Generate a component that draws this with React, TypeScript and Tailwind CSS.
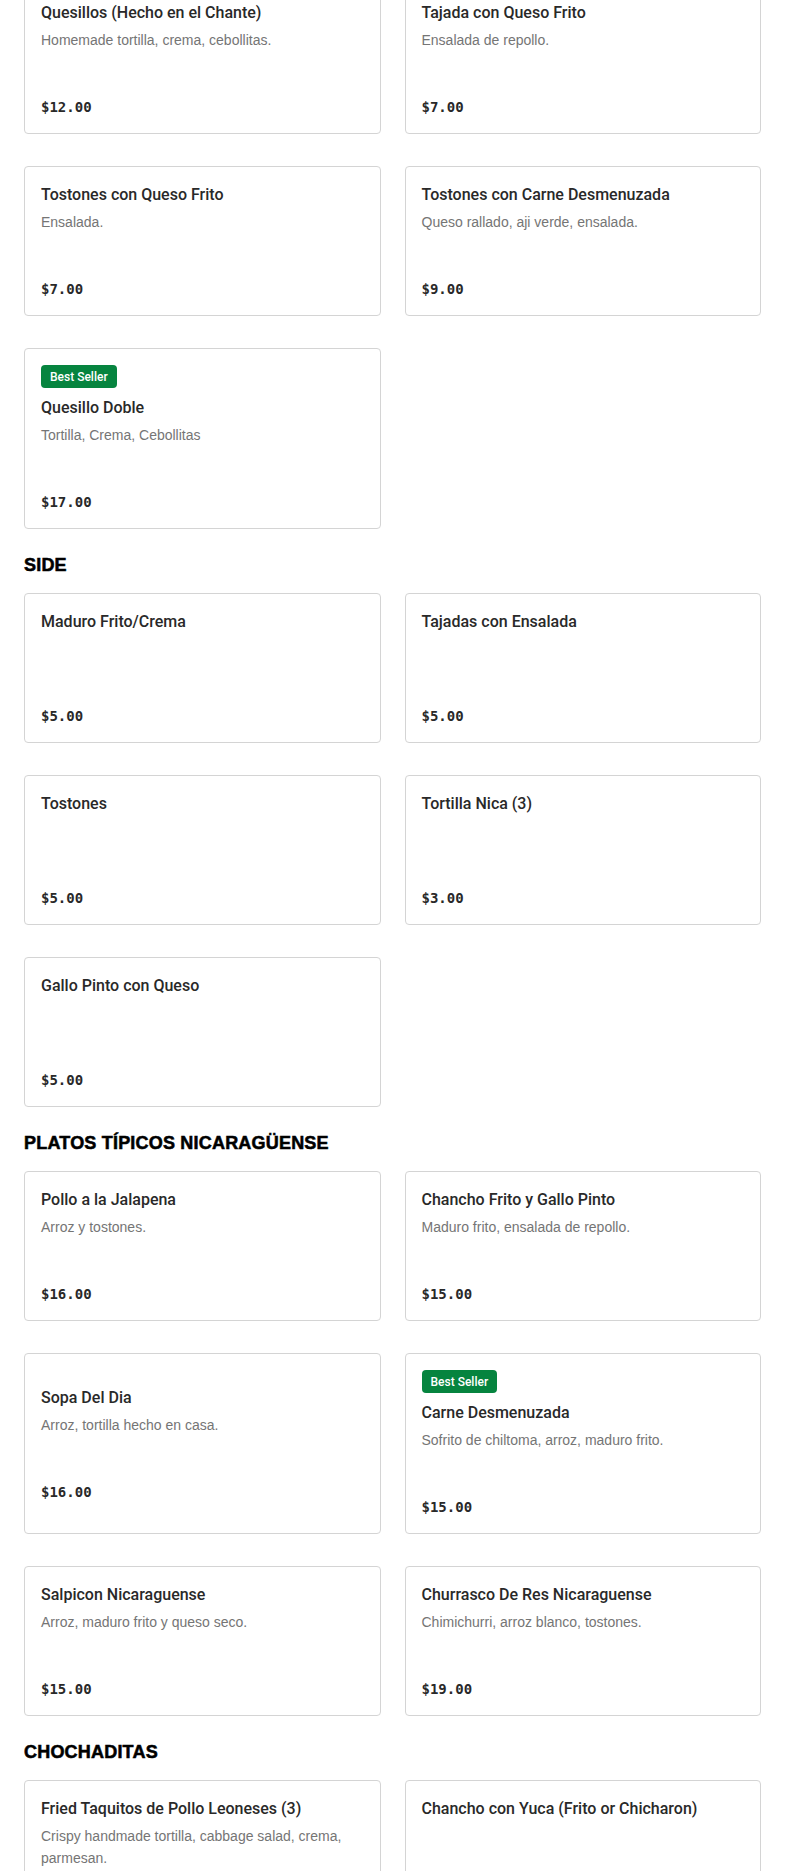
import React from 'react';

interface MenuItem {
  name: string;
  description?: string;
  price?: string;
  badge?: string;
}

interface MenuSection {
  title?: string;
  items: MenuItem[];
}

const sections: MenuSection[] = [
  {
    items: [
      { name: 'Quesillos (Hecho en el Chante)', description: 'Homemade tortilla, crema, cebollitas.', price: '$12.00' },
      { name: 'Tajada con Queso Frito', description: 'Ensalada de repollo.', price: '$7.00' },
      { name: 'Tostones con Queso Frito', description: 'Ensalada.', price: '$7.00' },
      { name: 'Tostones con Carne Desmenuzada', description: 'Queso rallado, aji verde, ensalada.', price: '$9.00' },
      { name: 'Quesillo Doble', description: 'Tortilla, Crema, Cebollitas', price: '$17.00', badge: 'Best Seller' },
    ],
  },
  {
    title: 'SIDE',
    items: [
      { name: 'Maduro Frito/Crema', price: '$5.00' },
      { name: 'Tajadas con Ensalada', price: '$5.00' },
      { name: 'Tostones', price: '$5.00' },
      { name: 'Tortilla Nica (3)', price: '$3.00' },
      { name: 'Gallo Pinto con Queso', price: '$5.00' },
    ],
  },
  {
    title: 'PLATOS TÍPICOS NICARAGÜENSE',
    items: [
      { name: 'Pollo a la Jalapena', description: 'Arroz y tostones.', price: '$16.00' },
      { name: 'Chancho Frito y Gallo Pinto', description: 'Maduro frito, ensalada de repollo.', price: '$15.00' },
      { name: 'Sopa Del Dia', description: 'Arroz, tortilla hecho en casa.', price: '$16.00' },
      { name: 'Carne Desmenuzada', description: 'Sofrito de chiltoma, arroz, maduro frito.', price: '$15.00', badge: 'Best Seller' },
      { name: 'Salpicon Nicaraguense', description: 'Arroz, maduro frito y queso seco.', price: '$15.00' },
      { name: 'Churrasco De Res Nicaraguense', description: 'Chimichurri, arroz blanco, tostones.', price: '$19.00' },
    ],
  },
  {
    title: 'CHOCHADITAS',
    items: [
      { name: 'Fried Taquitos de Pollo Leoneses (3)', description: 'Crispy handmade tortilla, cabbage salad, crema, parmesan.' },
      { name: 'Chancho con Yuca (Frito or Chicharon)' },
    ],
  },
];

function ItemCard({ item }: { item: MenuItem }) {
  return (
    <div className="flex flex-col justify-center rounded-[4px] border border-[#d4d4d4] bg-white p-4">
      <div className="flex flex-col">
        {item.badge && (
          <span className="mb-2 inline-flex h-[23px] w-fit items-center rounded-[4px] bg-[#06843f] px-[9px] font-['Roboto',sans-serif] text-[12px] font-medium text-white">
            {item.badge}
          </span>
        )}
        <h3 className="font-['Roboto',sans-serif] text-[16px] font-medium leading-[24px] text-[#292929]">
          {item.name}
        </h3>
        <div className="min-h-[72px]">
          {item.description && (
            <p className="pt-1 font-['Liberation_Sans',sans-serif] text-[14px] leading-[22px] text-[#757575]">
              {item.description}
            </p>
          )}
        </div>
        {item.price && (
          <p className="h-5 font-['DejaVu_Sans_Mono',monospace] text-[14px] font-bold leading-[20px] text-[#292929]">
            {item.price}
          </p>
        )}
      </div>
    </div>
  );
}

export default function App() {
  return (
    <div className="min-h-screen bg-white px-6">
      {sections.map((section, index) => (
        <section key={section.title ?? index} className={index === 0 ? '-mt-4' : ''}>
          {section.title && (
            <h2 className="mb-[14px] mt-[22px] font-['Liberation_Sans',sans-serif] text-[18px] font-bold leading-[28px] tracking-[0.2px] text-black [-webkit-text-stroke:0.55px_#000]">
              {section.title}
            </h2>
          )}
          <div className="grid grid-cols-2 gap-x-6 gap-y-8">
            {section.items.map((item) => (
              <ItemCard key={item.name} item={item} />
            ))}
          </div>
        </section>
      ))}
    </div>
  );
}
